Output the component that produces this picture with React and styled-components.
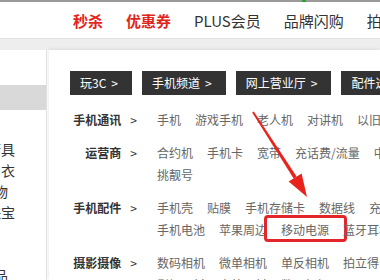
import React from 'react';
import styled, { createGlobalStyle } from 'styled-components';

const GlobalStyle = createGlobalStyle`
  html, body {
    margin: 0;
    padding: 0;
    width: 380px;
    height: 280px;
    overflow: hidden;
    background: #fff;
  }
  body {
    font-family: "Noto Sans CJK SC", "Microsoft YaHei", sans-serif;
  }
`;

const navLinks = [
  { text: '秒杀', hot: true },
  { text: '优惠券', hot: true },
  { text: 'PLUS会员' },
  { text: '品牌闪购' },
  { text: '拍卖' },
];

const tabs = ['玩3C', '手机频道', '网上营业厅', '配件选购中心'];

const groups = [
  { label: '手机通讯', items: ['手机', '游戏手机', '老人机', '对讲机', '以旧换新'] },
  { label: '运营商', items: ['合约机', '手机卡', '宽带', '充话费/流量', '中国联通', '挑靓号'] },
  {
    label: '手机配件',
    items: ['手机壳', '贴膜', '手机存储卡', '数据线', '充电器', '手机电池', '苹果周边', '移动电源', '蓝牙耳机'],
  },
  { label: '摄影摄像', items: ['数码相机', '微单相机', '单反相机', '拍立得', '影棚器材', '户外器材', '数码相框'] },
];

const sideItems = [
  { text: '家居/家具/家装/厨具', tail: 31 },
  { text: '男装/女装/童装/内衣', tail: 31 },
  { text: '美妆/个护清洁/宠物', tail: 38 },
  { text: '女鞋/箱包/钟表/珠宝', tail: 31 },
  { text: '男鞋/运动/户外', tail: 60 },
  { text: '房产/汽车/汽车用品', tail: 60 },
  { text: '母婴/玩具乐器/礼品', tail: 38 },
];

const App = () => {
  return (
    <Page>
      <GlobalStyle />
      <TopLine />
      <Nav>
        {navLinks.map((l) => (
          <NavLink key={l.text} $hot={l.hot}>
            {l.text}
          </NavLink>
        ))}
      </Nav>
      <Band />
      <Body>
        <Sidebar>
          <ActiveRow />
          <SideList>
            {sideItems.map((s) => (
              <SideItem key={s.text} $tail={s.tail}>
                <span>{s.text}</span>
              </SideItem>
            ))}
          </SideList>
        </Sidebar>
        <Panel>
          <Tabs>
            {tabs.map((t) => (
              <Tab key={t}>
                {t}
                <TabArrow>&gt;</TabArrow>
              </Tab>
            ))}
          </Tabs>
          <Groups>
            {groups.map((g) => (
              <Group key={g.label}>
                <Label>
                  {g.label}
                  <LabelArrow>&gt;</LabelArrow>
                </Label>
                <Items>
                  {g.items.map((it) => (
                    <Item key={it} $marked={it === '移动电源'}>
                      {it}
                    </Item>
                  ))}
                </Items>
              </Group>
            ))}
          </Groups>
        </Panel>
      </Body>
      <Arrow viewBox='0 0 380 280' width='380' height='280'>
        <polygon points='252.2,112.4 253.8,111.6 296.6,176.4 293.6,178.6' fill='#e8221c' />
        <polygon points='307,197 288.6,181.6 301.6,173.4' fill='#e8221c' />
      </Arrow>
    </Page>
  );
};

const Page = styled.div`
  position: relative;
  width: 380px;
  height: 280px;
  overflow: hidden;
  background: #fff;
`;

const TopLine = styled.div`
  height: 2px;
  background: linear-gradient(
    to right,
    #9a9a9a 0,
    #9a9a9a 302px,
    #2aa52a 302px,
    #2aa52a 306px,
    #9a9a9a 306px
  );
`;

const Nav = styled.div`
  height: 36px;
  display: flex;
  align-items: center;
  gap: 23px;
  padding-left: 73px;
  white-space: nowrap;
  background: #fff;
`;

const NavLink = styled.span`
  font-size: 15px;
  color: ${(p) => (p.$hot ? '#e1251b' : '#333')};
  font-weight: ${(p) => (p.$hot ? 700 : 400)};
`;

const Band = styled.div`
  height: 11px;
  background: #eeeeee;
  border-top: 1px solid #e2e2e2;
`;

const Body = styled.div`
  display: flex;
  gap: 2px;
  height: 230px;
`;

const Sidebar = styled.div`
  width: 46px;
  flex-shrink: 0;
  background: #fff;
  border-right: 1px solid #e4e4e4;
  padding-top: 35px;
  overflow: hidden;
`;

const ActiveRow = styled.div`
  height: 25px;
  background: #d9d9d9;
`;

const SideList = styled.div`
  margin-top: 29px;
`;

const SideItem = styled.div`
  height: 21px;
  line-height: 21px;
  font-size: 14px;
  color: #333;
  white-space: nowrap;
  display: flex;
  justify-content: flex-end;
  padding-right: ${(p) => p.$tail}px;
`;

const Panel = styled.div`
  flex: 1;
  min-width: 0;
  background: #fff;
  padding: 21px 0 0 21px;
  box-shadow: -1px -1px 3px rgba(0, 0, 0, 0.08);
`;

const Tabs = styled.div`
  display: flex;
  gap: 10px;
  white-space: nowrap;
`;

const Tab = styled.div`
  flex-shrink: 0;
  height: 24px;
  line-height: 24px;
  padding: 0 14px 0 10px;
  background: #333;
  color: #fff;
  font-size: 12px;
`;

const TabArrow = styled.span`
  margin-left: 5px;
`;

const Groups = styled.div`
  margin-top: 14px;
`;

const Group = styled.div`
  display: grid;
  grid-template-columns: 67px 280px;
  column-gap: 20px;
  padding-bottom: 11px;
`;

const Label = styled.div`
  text-align: right;
  font-size: 12px;
  line-height: 22px;
  font-weight: 700;
  color: #333;
  white-space: nowrap;
`;

const LabelArrow = styled.span`
  margin-left: 9px;
  font-weight: 400;
`;

const Items = styled.div`
  display: flex;
  flex-wrap: wrap;
  column-gap: 14px;
`;

const Item = styled.span`
  position: relative;
  font-size: 12px;
  line-height: 22px;
  color: #666;
  white-space: nowrap;

  ${(p) =>
    p.$marked &&
    `
    &::after {
      content: '';
      position: absolute;
      top: -4px;
      bottom: -1px;
      left: -17px;
      right: -18px;
      border: 3px solid #e3262a;
      border-radius: 4px;
    }
  `}
`;

const Arrow = styled.svg`
  position: absolute;
  top: 0;
  left: 0;
  pointer-events: none;
`;

export default App;
